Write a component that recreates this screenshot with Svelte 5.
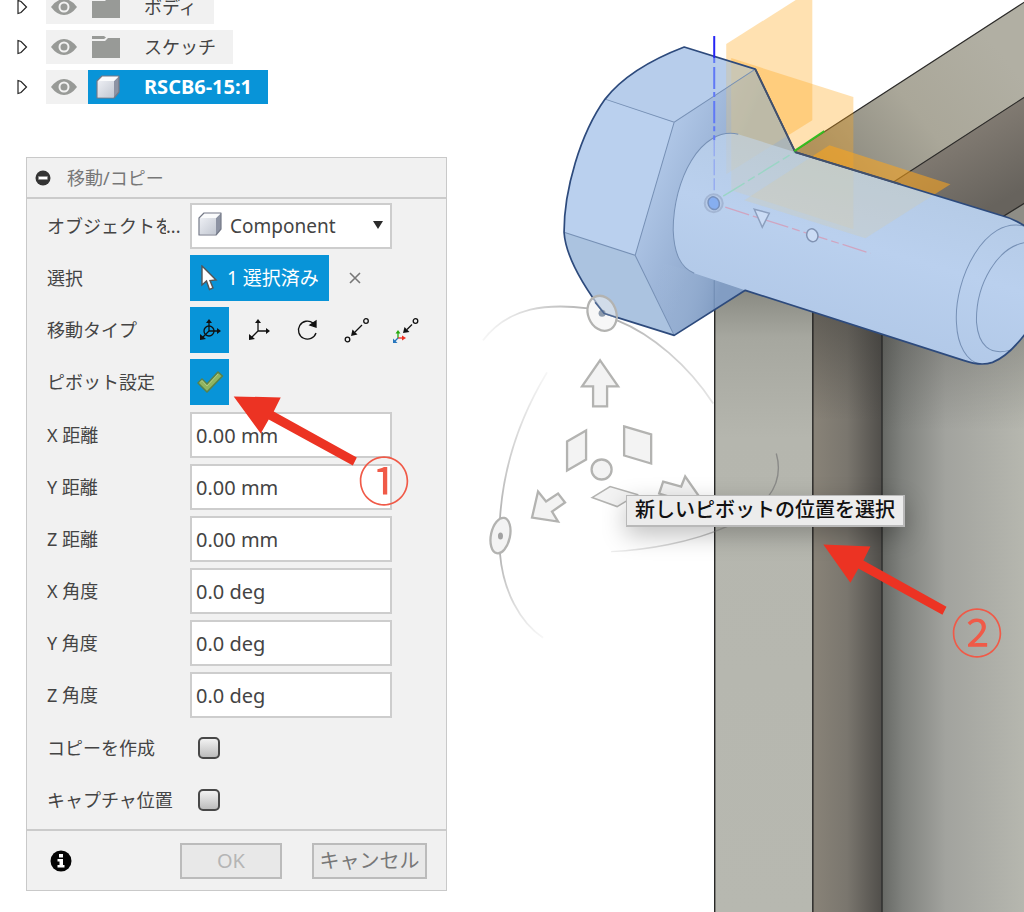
<script>
  const tree = [
    { name: 'ボディ', kind: 'folder' },
    { name: 'スケッチ', kind: 'folder' },
    { name: 'RSCB6-15:1', kind: 'component' },
  ];
  const fields = [
    { id: 'dx', label: 'X 距離', value: '0.00 mm' },
    { id: 'dy', label: 'Y 距離', value: '0.00 mm' },
    { id: 'dz', label: 'Z 距離', value: '0.00 mm' },
    { id: 'ax', label: 'X 角度', value: '0.0 deg' },
    { id: 'ay', label: 'Y 角度', value: '0.0 deg' },
    { id: 'az', label: 'Z 角度', value: '0.0 deg' },
  ];
  const checks = [
    { id: 'copy', label: 'コピーを作成' },
    { id: 'capture', label: 'キャプチャ位置' },
  ];
  const moveTypes = ['自由移動', '移動', '回転', '点から点', '点から位置'];
  let moveType = $state(0);

  const bolt =
    'M684 47 L755 69 L795 152 L1000 215 Q1016 219 1030 230 L1030 326 Q1010 355 992 362 Q980 366 963 360 L745 290 L674 335 L604 313 Q566 263 564 232 C564 190 580 134 605 99 C623 76 650 60 684 47 Z';
</script>

{#snippet cube()}
  <svg class="cube" viewBox="0 0 24 24" aria-hidden="true">
    <path d="M1 6 L6 1 H23 V17 L18 23 H1 Z" fill="#e9ebf0" />
    <path d="M18 6 L23 1 V17 L18 23 Z" fill="#8d93a3" />
    <path d="M1 6 L6 1 H23 L18 6 Z" fill="#fafbfc" />
    <path d="M2 6 H18 V22 H2 Z" fill="url(#cubeFace)" />
    <path d="M1 6 L6 1 H23 V17 L18 23 H1 Z" fill="none" stroke="#747987" stroke-width="1.2" stroke-linejoin="round" />
  </svg>
{/snippet}

<main>
  <svg class="scene" viewBox="0 0 1024 912" preserveAspectRatio="xMidYMin slice" aria-hidden="true">
    <defs>
      <linearGradient id="cubeFace" x1="0" y1="0" x2="1" y2="1">
        <stop offset="0" stop-color="#eceef3" /><stop offset="1" stop-color="#c3c8d2" />
      </linearGradient>
      <linearGradient id="beam" gradientUnits="userSpaceOnUse" x1="830" y1="170" x2="990" y2="40">
        <stop offset="0" stop-color="#8a887d" /><stop offset=".5" stop-color="#aaa799" /><stop offset="1" stop-color="#b1afa3" />
      </linearGradient>
      <linearGradient id="under" gradientUnits="userSpaceOnUse" x1="940" y1="130" x2="985" y2="210">
        <stop offset="0" stop-color="#857e75" /><stop offset="1" stop-color="#67635d" />
      </linearGradient>
      <linearGradient id="post" x1="0" y1="0" x2="0" y2="1">
        <stop offset="0" stop-color="#83847c" /><stop offset=".09" stop-color="#a6a79f" /><stop offset=".25" stop-color="#b5b6ae" /><stop offset="1" stop-color="#b7b8b0" />
      </linearGradient>
      <linearGradient id="side" x1="0" y1="0" x2="1" y2="0">
        <stop offset="0" stop-color="#898378" /><stop offset=".5" stop-color="#7a766e" /><stop offset="1" stop-color="#514f4b" />
      </linearGradient>
      <linearGradient id="wall" x1="0" y1="0" x2="1" y2="0">
        <stop offset="0" stop-color="#666864" /><stop offset=".15" stop-color="#80827e" /><stop offset=".45" stop-color="#a2a39e" /><stop offset="1" stop-color="#b6b7af" />
      </linearGradient>
      <linearGradient id="topShade" x1="0" y1="0" x2="0" y2="1">
        <stop offset="0" stop-color="#33322f" stop-opacity=".5" /><stop offset="1" stop-color="#33322f" stop-opacity="0" />
      </linearGradient>
      <linearGradient id="headShade" gradientUnits="userSpaceOnUse" x1="640" y1="190" x2="712" y2="220">
        <stop offset="0" stop-color="#b1c8e8" /><stop offset="1" stop-color="#93acd0" />
      </linearGradient>
      <linearGradient id="headLow" gradientUnits="userSpaceOnUse" x1="655" y1="290" x2="716" y2="305">
        <stop offset="0" stop-color="#a9c1e0" stop-opacity="0" /><stop offset="1" stop-color="#829dc3" />
      </linearGradient>
      <linearGradient id="shaft" gradientUnits="userSpaceOnUse" x1="870" y1="160" x2="823" y2="320">
        <stop offset="0" stop-color="#b4cae5" /><stop offset=".5" stop-color="#bad0ee" /><stop offset="1" stop-color="#b2c9e8" />
      </linearGradient>
      <linearGradient id="lowerRing" x1="0" y1="0" x2="1" y2="0">
        <stop offset="0" stop-color="#888" stop-opacity=".15" /><stop offset="1" stop-color="#777" stop-opacity=".7" />
      </linearGradient>
      <linearGradient id="leftArc" x1="0" y1="0" x2="0" y2="1">
        <stop offset="0" stop-color="#aaa" stop-opacity=".1" /><stop offset="1" stop-color="#aaa" stop-opacity=".9" />
      </linearGradient>
      <linearGradient id="leftTail" x1="0" y1="0" x2="0" y2="1">
        <stop offset="0" stop-color="#aaa" stop-opacity=".9" /><stop offset="1" stop-color="#aaa" stop-opacity=".1" />
      </linearGradient>
      <linearGradient id="topArc" x1="0" y1="0" x2="1" y2="0">
        <stop offset="0" stop-color="#aaa" stop-opacity=".1" /><stop offset="1" stop-color="#aaa" stop-opacity=".9" />
      </linearGradient>
      <linearGradient id="rightArc" x1="0" y1="0" x2="1" y2="0">
        <stop offset="0" stop-color="#aaa" stop-opacity=".9" /><stop offset="1" stop-color="#aaa" stop-opacity=".3" />
      </linearGradient>
      <clipPath id="boltClip"><path d={bolt} /></clipPath>
    </defs>

    <path d="M1024 2 L794 151 V270 H1024 Z" fill="url(#beam)" />
    <path d="M1024 97 L880 190 L1000 230 L1024 205 Z" fill="url(#under)" />
    <path d="M1024 203 L990 225 H1024 Z" fill="#8e8d86" />
    <g stroke="#2c2b29" stroke-width="1.2">
      <path d="M794 151 L1024 2 M885 187 L1024 97 M998 219 L1024 203" />
    </g>
    <rect x="714" y="280" width="98" height="632" fill="url(#post)" />
    <rect x="812" y="290" width="69" height="622" fill="url(#side)" />
    <rect x="881" y="300" width="143" height="612" fill="url(#wall)" />
    <rect x="812" y="300" width="69" height="120" fill="url(#topShade)" />
    <rect x="881" y="320" width="143" height="110" fill="url(#topShade)" opacity=".6" />
    <g fill="none" stroke="#1d1d1c" stroke-width="1.3">
      <path d="M714.5 280 V912 M812.5 300 V912 M881.5 320 V912" />
    </g>

    <g fill="#ffa61a" fill-opacity=".34">
      <path d="M726 44 L797 -1 H812 V120 L726 174 Z" />
      <path d="M731 58 L853 97 V229 L731 190 Z" />
      <path d="M829 145 L950 184 L865 238 L744 200 Z" fill-opacity=".55" />
    </g>

    <path d={bolt} fill="#bad0ee" />
    <path d="M605 99 L674 122 L755 69 L684 47 C650 60 623 76 605 99 Z" fill="#b7cdeb" />
    <path d="M564 232 L635 255 L674 335 L604 313 Q566 263 564 232 Z" fill="#abc3e0" />
    <path d="M674 122 L755 69 L795 152 L745 290 L674 335 L635 255 Z" fill="url(#headShade)" />
    <path d="M635 255 L674 335 L745 290 L688 270 Z" fill="url(#headLow)" />
    <g clip-path="url(#boltClip)" fill="#dcbf7c">
      <path d="M726 44 L812 -10 V120 L726 174 Z" opacity=".25" />
      <path d="M731 58 L853 97 V229 L731 190 Z" opacity=".2" />
    </g>
    <path d="M795 152 L738 134 C700 126 673 180 673 230 C674 253 680 267 694 273 L745 290 L963 360 Q980 366 992 362 Q1010 355 1030 326 V230 Q1016 219 1000 215 Z" fill="url(#shaft)" />
    <g clip-path="url(#boltClip)" fill="#dccb9a">
      <path d="M726 44 L812 -10 V120 L726 174 Z" opacity=".15" />
      <path d="M731 58 L853 97 V229 L731 190 Z" opacity=".2" />
      <path d="M829 145 L950 184 L865 238 L744 200 Z" opacity=".25" />
      <path d="M714 280 V335" stroke="#6f8bb2" />
    </g>
    <g fill="none" stroke="#7690b5" stroke-width="1">
      <path d="M605 99 L674 122 L755 69 M674 122 L635 255 L564 232 M635 255 L674 335" />
      <path d="M738 134 C700 126 673 180 673 230 C674 253 680 267 694 273" />
      <path d="M1024 226 C985 215 953 278 956 323 C957 345 966 361 980 364" />
      <path d="M1026 242 C997 246 975 284 976 322 C978 345 989 355 1009 350" />
    </g>
    <path d={bolt} fill="none" stroke="#2d4a7c" stroke-width="1.7" stroke-linejoin="round" />
    <path d="M755 69 L795 152 L900 184" fill="none" stroke="#43506a" stroke-width="1.8" />

    <path d="M714 36 V58" stroke="#2525f5" stroke-width="2" />
    <path d="M714 58 V140" stroke="#6079f6" stroke-width="2" stroke-dasharray="5 4 22 3" />
    <path d="M714 140 V190" stroke="#94aaf0" stroke-width="1.4" stroke-dasharray="16 3" />
    <path d="M794 151 L824 131" stroke="#35bd21" stroke-width="2" />
    <path d="M723 196 L794 152" stroke="#9bd5c5" stroke-width="1.4" stroke-dasharray="25 4 8 4" />
    <path d="M725 207 L870 253" stroke="#d0a5c0" stroke-width="1.3" stroke-dasharray="25 4 8 4" />
    <circle cx="713.500" cy="203" r="9" fill="#b7cae6" stroke="#a3b6d4" stroke-width="2" />
    <ellipse cx="713.500" cy="203" rx="5.500" ry="6.500" fill="#86aef0" stroke="#7791bd" stroke-width="1.5" transform="rotate(-25 713.500 203)" />
    <path d="M754 209 L769 213 L762 227 Z" fill="#cbdcf5" stroke="#8c9fbe" stroke-width="1.5" />
    <ellipse cx="812" cy="235" rx="5.500" ry="6.500" fill="#cbdcf5" stroke="#8193b3" stroke-width="1.5" transform="rotate(-20 812 235)" />

    <g fill="none" stroke-width="1.8">
      <path d="M483 340 C509 306 548 303 588 308" stroke="url(#topArc)" />
      <path d="M617 320 C652 334 688 365 713 403" stroke="url(#rightArc)" />
      <path d="M547 372 C518 420 503 470 500 518" stroke="url(#leftArc)" />
      <path d="M500 553 C503 590 520 622 543 637" stroke="url(#leftTail)" />
      <path d="M611 551 C680 548 795 520 776 453" stroke="url(#lowerRing)" stroke-width="1.4" />
    </g>
    <g fill="#f0f0f0" fill-opacity=".8" stroke="#b3b3b1" stroke-width="2.300" stroke-linejoin="miter">
      <ellipse cx="602" cy="313" rx="14" ry="18" transform="rotate(-22 602 313)" fill-opacity=".55" />
      <ellipse cx="500.500" cy="535" rx="9.500" ry="18" transform="rotate(12 500.500 535)" />
      <path d="M600 360 L618 386 H607 V406 H593 V386 H582 Z" />
      <path d="M586 430 V459 L567 470 V441 Z" />
      <path d="M624 426 L651 434 V463 L624 455 Z" />
      <circle cx="601.500" cy="469" r="10" />
      <path d="M592 497 L610 486 L637 494 L617 506 Z" stroke-width="1.5" />
      <path d="M538 491 L546 501 L558 493 L565 502 L552 511 L558 521 L532 517 Z" />
      <path d="M663 481 L681 486 L685 476 L699 496 L684 510 L682 500 L659 493 Z" />
    </g>
    <circle cx="602" cy="313" r="3.500" fill="#8e9bac" />
    <ellipse cx="500.500" cy="535.500" rx="2.500" ry="3.500" fill="#a2a2a2" />
    <path d="M595 302 L604 313 L616 317" fill="none" stroke="#4a6590" stroke-width="1.5" />
  </svg>

  <ul class="tree">
    {#each tree as item}
      <li class:selected={item.kind === 'component'}>
        <button class="twist" aria-label={item.name}>
          <svg viewBox="0 0 12 16" width="12" height="16"><path d="M2 1.500 V14.500 L5 13.500 L10.500 8 L5 2.500 Z" fill="#fff" stroke="#222" stroke-width="1.2" /></svg>
        </button>
        <span class="eye">
          <svg viewBox="0 0 28 20" width="28" height="20"><path d="M1 10 Q7 2 14 2 T27 10 Q21 18 14 18 T1 10 Z" fill="#989a97" /><circle cx="14" cy="10" r="4.500" fill="#989a97" stroke="#f1f1f1" stroke-width="2" /></svg>
        </span>
        <span class="name">
          {#if item.kind === 'folder'}
            <svg viewBox="0 0 28 22" width="28" height="22"><path d="M0 0 H12 L14 1.500 L12 3 H0 Z M0 5 H13 L16 2 H28 V22 H0 Z" fill="#989a97" /></svg>
          {:else}
            {@render cube()}
          {/if}
          {item.name}
        </span>
      </li>
    {/each}
  </ul>

  <form class="dialog" onsubmit={(e) => e.preventDefault()}>
    <header>
      <svg viewBox="0 0 16 16" width="16" height="16" aria-hidden="true"><circle cx="8" cy="8" r="7.500" fill="#333" /><rect x="3.500" y="6.500" width="9" height="3" fill="#fff" stroke="#888" stroke-width=".5" /></svg>
      <h1>移動/コピー</h1>
    </header>

    <div class="body">
      <div class="group">
        <div class="row">
          <label class="cut" for="object"><span>オブジェクトを</span>...</label>
          <div class="picker">
            {@render cube()}
            <select id="object"><option>Component</option></select>
            <svg class="caret" viewBox="0 0 12 10" width="12" height="10" aria-hidden="true"><path d="M1 1 H11 L6 9 Z" fill="#2b2b2b" /></svg>
          </div>
        </div>
        <div class="row">
          <span class="label">選択</span>
          <button type="button" class="pick">
            <svg viewBox="0 0 18 26" width="18" height="26" aria-hidden="true"><path d="M2 1 V20 L6.500 16 L9.500 24.500 L13 23 L10 15.500 L16 15 Z" fill="#fff" stroke="#555" stroke-width="1.4" /></svg>
            1 選択済み
          </button>
          <button type="button" class="clear" aria-label="クリア">
            <svg viewBox="0 0 12 12" width="12" height="12"><path d="M1 1 L11 11 M11 1 L1 11" stroke="#777" stroke-width="1.6" /></svg>
          </button>
        </div>
        <div class="row">
          <span class="label">移動タイプ</span>
          <div class="types">
            {#each moveTypes as type, i}
              <button type="button" aria-label={type} class:on={moveType === i} onclick={() => (moveType = i)}>
                <svg viewBox="0 0 28 28" width="28" height="28" fill="none" stroke="#111" stroke-width="1.3">
                  {#if i < 2}
                    {#if i === 0}<circle cx="13" cy="15" r="5" />{/if}
                    <path d="M13 5 V15 H23 M13 15 L6 22" />
                    <path d="M13 3 L16 7 H10 Z M25 15 L21 12 V18 Z M4 24 V18 L10 23 Z" fill="#111" stroke="none" />
                  {:else if i === 2}
                    <path d="M19 7 A9 9 0 1 0 22 17" />
                    <path d="M16 9 L22 5 V11 Z" fill="#111" />
                  {:else if i === 3}
                    <circle cx="23" cy="5" r="2.300" /><circle cx="4.500" cy="23.500" r="2.300" />
                    <path d="M19 9 L12 16" /><path d="M8 20 L9.500 13.500 L14.500 18.500 Z" fill="#111" stroke="none" />
                  {:else}
                    <circle cx="23.500" cy="5" r="2.300" />
                    <path d="M20 8.500 L15 13.500" /><path d="M11 17 L12.500 11 L17.500 16 Z" fill="#111" stroke="none" />
                    <path d="M6 16 V22" stroke="#26a90d" /><path d="M6 14 L8.500 17.500 H3.500 Z" fill="#26a90d" stroke="none" />
                    <path d="M6 22 H11" stroke="#ee2c1e" /><path d="M14 22 L10 19.500 V24.500 Z" fill="#ee2c1e" stroke="none" />
                    <path d="M6 22 L3 25" stroke="#2676bd" /><path d="M1 27 V22.500 L5.500 27 Z" fill="#2676bd" stroke="none" />
                  {/if}
                </svg>
              </button>
            {/each}
          </div>
        </div>
        <div class="row">
          <span class="label">ピボット設定</span>
          <div class="types">
            <button type="button" class="on" aria-label="ピボット設定">
              <svg viewBox="0 0 28 28" width="28" height="28"><path d="M2 15 L6 11 L11 16 L22 4 L26.500 8 L11 24 Z" fill="#8fb561" stroke="#58824b" stroke-width="1.600" stroke-linejoin="round" /><path d="M4 14.500 L6 12.500 L11 18 L22 6" fill="none" stroke="#b3ca82" /></svg>
            </button>
          </div>
        </div>
      </div>

      <div class="group">
        {#each fields as field}
          <div class="row">
            <label for={field.id}>{field.label}</label>
            <input type="text" id={field.id} value={field.value} />
          </div>
        {/each}
      </div>

      <div class="group">
        {#each checks as check}
          <div class="row">
            <label for={check.id}>{check.label}</label>
            <input type="checkbox" id={check.id} />
          </div>
        {/each}
      </div>
    </div>

    <footer>
      <svg class="info" viewBox="0 0 22 22" width="22" height="22" aria-hidden="true"><circle cx="11" cy="11" r="10.500" fill="#050505" /><path d="M9 4 H13 V7.500 H9 Z M7.500 9 H13 V15 H14.500 V17.500 H7.500 V15 H9.500 V11.500 H7.500 Z" fill="#fff" /></svg>
      <button type="button" class="ok" disabled>OK</button>
      <button type="button" class="cancel">キャンセル</button>
    </footer>
  </form>

  <div class="tooltip" role="tooltip">新しいピボットの位置を選択</div>

  <svg class="scene marks" viewBox="0 0 1024 912" preserveAspectRatio="xMidYMin slice" aria-hidden="true">
    <g fill="#ec3323">
      <path d="M234 396 L281 397 L274 411 L357 457 L353 465 L269 419 L261 433 Z" />
      <path d="M823 544 L870 546 L863 560 L946 606 L942 614 L858 568 L850 582 Z" />
    </g>
  </svg>
  <span class="step first">①</span>
  <span class="step second">②</span>
</main>

<style>
  :global(body) {
    margin: 0;
    background: #fff;
  }
  main {
    position: relative;
    display: flow-root;
    min-height: 100vh;
    overflow: hidden;
    color: #444;
    font: 18px/24px 'Noto Sans', 'Noto Sans CJK JP', sans-serif;
  }
  button,
  input,
  select {
    box-sizing: border-box;
    margin: 0;
    padding: 0;
    border: 0;
    background: none;
    color: inherit;
    font: inherit;
  }
  svg {
    display: block;
    flex: none;
  }
  .scene {
    position: absolute;
    inset: 0;
    width: 100%;
    height: 100%;
  }
  .marks {
    pointer-events: none;
  }
  .cube {
    width: 24px;
    height: 24px;
  }

  .tree {
    position: relative;
    display: flex;
    flex-direction: column;
    align-items: flex-start;
    gap: 6px;
    margin: -10px 0 0 14px;
    padding: 0;
    list-style: none;
  }
  .tree li {
    display: flex;
    height: 34px;
  }
  .twist {
    width: 32px;
    padding-left: 2px;
  }
  .eye {
    display: flex;
    align-items: center;
    padding: 0 10px 0 4px;
    background: #f1f1f1;
  }
  .name {
    display: flex;
    align-items: center;
    gap: 24px;
    padding: 0 17px 0 4px;
    background: #f1f1f1;
  }
  .selected .name {
    padding: 0 16px 0 8px;
    background: #0894d8;
    color: #fff;
    font-size: 20px;
    font-weight: 700;
  }

  .dialog {
    position: relative;
    box-sizing: border-box;
    width: 421px;
    max-width: calc(100% - 26px);
    margin: 53px 0 22px 26px;
    border: 1px solid #c9c9c9;
    background: #f1f1f1;
  }
  header {
    display: flex;
    align-items: center;
    gap: 16px;
    height: 39px;
    padding-left: 8px;
    border-bottom: 2px solid #cbcbcb;
    color: #777;
  }
  h1 {
    margin: 0;
    font: inherit;
  }
  .body {
    display: flex;
    flex-direction: column;
    gap: 7px;
    padding: 4px 54px 6px 20px;
  }
  .group {
    display: flex;
    flex-direction: column;
    gap: 6px;
  }
  .row {
    display: flex;
    align-items: center;
    height: 46px;
  }
  label,
  .label {
    flex: none;
    width: 143px;
  }
  .cut {
    display: flex;
  }
  .cut span {
    width: 119px;
    overflow: hidden;
    white-space: nowrap;
  }
  .picker {
    position: relative;
    flex: 1;
    height: 46px;
  }
  .picker .cube,
  .caret {
    position: absolute;
    top: 9px;
    left: 8px;
    pointer-events: none;
  }
  .picker .caret {
    top: 17px;
    right: 8px;
    left: auto;
  }
  select {
    width: 100%;
    height: 100%;
    padding-left: 38px;
    border: 2px solid #cdcdcd;
    background: #fff;
    appearance: none;
    font-size: 19px;
  }
  .picker .cube {
    z-index: 1;
  }
  .pick {
    display: flex;
    align-items: center;
    gap: 9px;
    height: 46px;
    padding: 0 10px 0 10px;
    background: #0894d8;
    color: #fff;
    font-size: 19px;
    white-space: nowrap;
  }
  .clear {
    margin-left: 20px;
  }
  .types {
    display: flex;
    gap: 10px;
  }
  .types button {
    display: grid;
    place-items: center;
    width: 39px;
    height: 46px;
  }
  .types .on {
    background: #0894d8;
  }
  input[type='text'] {
    flex: 1;
    min-width: 0;
    height: 46px;
    padding-left: 4px;
    border: 2px solid #cdcdcd;
    background: #fff;
    font-size: 20px;
  }
  input[type='checkbox'] {
    width: 22px;
    height: 22px;
    margin-left: 8px;
    border: 2px solid #484848;
    border-radius: 5px;
    background: linear-gradient(#f2f2f2, #bcbcbc);
    appearance: none;
  }
  input[type='checkbox']:checked {
    background: #0894d8;
  }
  footer {
    display: flex;
    align-items: center;
    height: 59px;
    padding: 0 19px 0 23px;
    border-top: 2px solid #cbcbcb;
  }
  footer button {
    height: 36px;
    border: 2px solid #bbb;
    background: #e8e8e8;
    color: #777;
    font-size: 20px;
  }
  .ok {
    width: 102px;
    margin-left: auto;
  }
  .ok:disabled {
    color: #b5b5b5;
  }
  .cancel {
    width: 115px;
    margin-left: 30px;
    white-space: nowrap;
  }

  .tooltip {
    position: absolute;
    top: 495px;
    left: 626px;
    padding: 1px 8px 2px;
    border: 1px solid #b9b9b9;
    border-width: 1px 2px 2px 1px;
    background: #ececec;
    box-shadow: 0 8px 24px rgb(0 0 0 / 25%);
    color: #111;
    font-size: 20px;
    font-weight: 500;
    line-height: 26px;
    white-space: nowrap;
  }
  .step {
    position: absolute;
    color: #f05a48;
    font: 52px/52px 'Noto Sans CJK JP', sans-serif;
  }
  .first {
    top: 453px;
    left: 358px;
  }
  .second {
    top: 605px;
    left: 951px;
  }
</style>
